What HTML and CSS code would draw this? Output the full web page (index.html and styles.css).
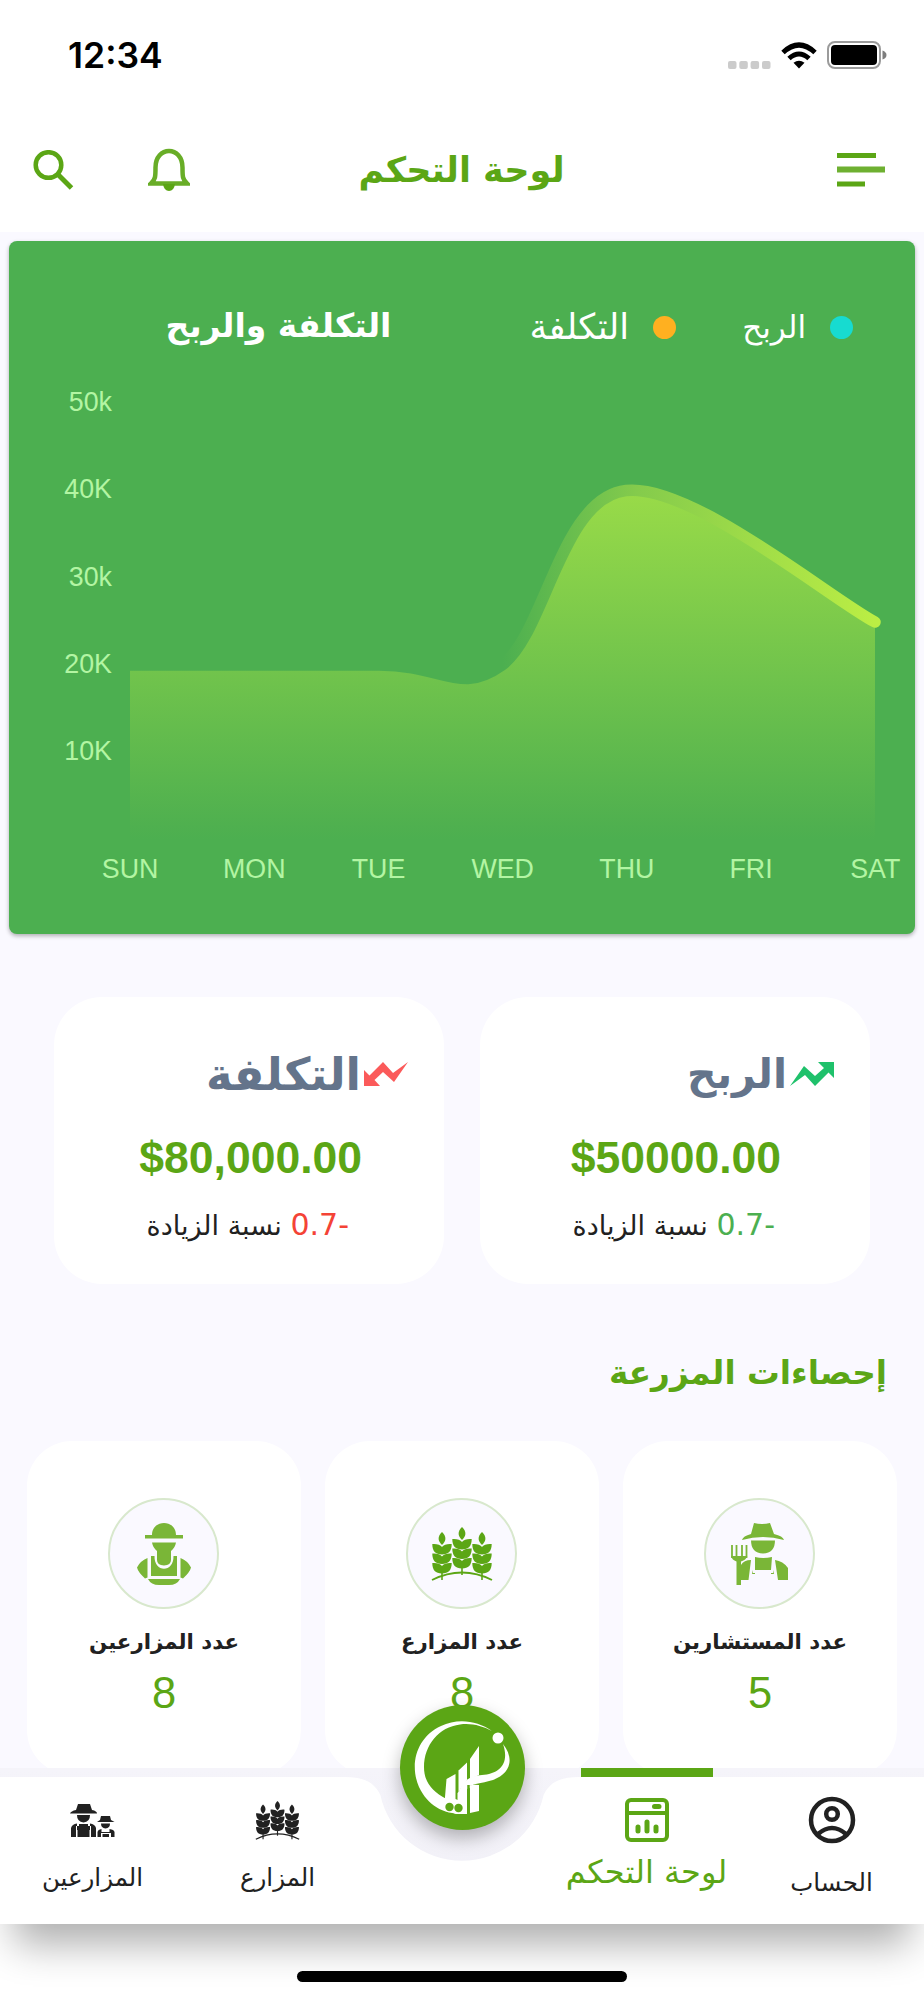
FILE: index.html
```html
<!DOCTYPE html>
<html lang="ar" dir="rtl">
<head>
    <meta charset="UTF-8">
    <meta name="viewport" content="width=device-width, initial-scale=1.0">
    <title>لوحة التحكم</title>
    <link rel="stylesheet" href="styles.css">
</head>
<body>
    <svg class="sprite" width="0" height="0">
        <defs>
            <path id="leafPair" d="M0 8.500C-6.500 8.500-9.700 5-9.700-2C-6-2.500-1.500-1.500 0 1C1.500-1.500 6-2.500 9.700-2C9.700 5 6.500 8.500 0 8.500Z"/>
            <g id="ear">
                <path d="M0-17C5-12 4-8 0-4C-4-8-5-12 0-17Z"/>
                <use href="#leafPair" y="-3"/>
                <use href="#leafPair" y="6.500"/>
                <use href="#leafPair" y="16"/>
                <path d="M-.8 22h1.600v9h-1.600z"/>
            </g>
            <g id="wheat">
                <use href="#ear" x="10" y="22"/>
                <use href="#ear" x="30" y="17"/>
                <use href="#ear" x="50" y="22"/>
                <path d="M0 53Q30 38 60 53" fill="none" stroke="currentColor" stroke-width="1.800"/>
            </g>
        </defs>
    </svg>

    <div class="screen">
        <div class="status-bar">
            <span class="time">12:34</span>
            <div class="status-icons">
                <svg width="43" height="8" viewBox="0 0 43 8" fill="#cbcbcb">
                    <rect width="8.500" height="8" rx="2"/><rect x="11.300" width="8.500" height="8" rx="2"/>
                    <rect x="22.600" width="8.500" height="8" rx="2"/><rect x="34" width="8.500" height="8" rx="2"/>
                </svg>
                <svg class="wifi" width="36" height="27" viewBox="0 0 36 27" fill="none" stroke="#000" stroke-width="5">
                    <path d="M2 10.500Q18-4.500 34 10.500"/>
                    <path d="M8 16.500Q18 7.500 28 16.500"/>
                    <path d="M18 26.500L12.500 20.800Q18 16.500 23.500 20.800Z" fill="#000" stroke="none"/>
                </svg>
                <svg width="60" height="28" viewBox="0 0 60 28">
                    <rect x="1" y="1" width="52" height="26" rx="7" fill="none" stroke="#9b9b9b" stroke-width="2"/>
                    <rect x="4" y="4" width="46" height="20" rx="4"/>
                    <path d="M55.500 9.500q4 1.500 4 4.500t-4 4.500z" fill="#7d7d7d"/>
                </svg>
            </div>
        </div>

        <header class="app-bar">
            <svg class="menu-icon" width="48" height="36" viewBox="0 0 48 36" stroke-width="5">
                <path d="M0 3.500h39M0 32h28"/>
                <path d="M0 17.500h48" stroke-width="6" opacity=".88"/>
            </svg>
            <h1>لوحة التحكم</h1>
            <div class="actions">
                <svg width="42" height="44" viewBox="0 0 42 44">
                    <path d="M3 35.500h36c-4.500-4-4.500-7-4.500-16C34.500 9 28 3 21 3S7.500 9 7.500 19.500c0 9 0 12-4.500 16z" fill="none" stroke="#5ba615" stroke-width="4.500" opacity=".92"/>
                    <path d="M15 36h12q-1 7-6 7t-6-7z" fill="#5ba615"/>
                </svg>
                <svg width="41" height="41" viewBox="0 0 41 41" fill="none" stroke="#5ba615">
                    <circle cx="15.500" cy="15" r="12.800" stroke-width="4.500"/>
                    <path d="M25 24.500L38.500 38" stroke-width="5"/>
                </svg>
            </div>
        </header>

        <main>
            <section class="chart-card">
                <div class="chart-head">
                    <span class="legend profit"><i></i>الربح</span>
                    <span class="legend cost"><i></i>التكلفة</span>
                    <h2>التكلفة والربح</h2>
                </div>
                <div class="chart">
                    <div class="y-axis">
                        <span>50k</span><span>40K</span><span>30k</span><span>20K</span><span>10K</span>
                    </div>
                    <svg width="757" height="450" viewBox="130 390 757 450">
                        <defs>
                            <linearGradient id="area" gradientUnits="userSpaceOnUse" x1="0" y1="482" x2="0" y2="840">
                                <stop offset="0" stop-color="#9bdc48"/>
                                <stop offset=".96" stop-color="#4fb04f"/>
                                <stop offset="1" stop-color="#4caf50"/>
                            </linearGradient>
                            <linearGradient id="line" gradientUnits="userSpaceOnUse" x1="130" y1="0" x2="875" y2="0">
                                <stop offset=".5" stop-color="#4caf50"/>
                                <stop offset=".68" stop-color="#84cb4c"/>
                                <stop offset="1" stop-color="#bbee44"/>
                            </linearGradient>
                        </defs>
                        <path fill="url(#area)" d="M130 665H379C444 665 459 695.600 502 665C545 634.400 561 497.500 626 490C691 482.500 831 599 875 622V840H130Z"/>
                        <path fill="none" stroke="url(#line)" stroke-width="11.500" stroke-linecap="round" d="M130 665H379C444 665 459 695.600 502 665C545 634.400 561 497.500 626 490.500C691 483 831 599 875 622"/>
                    </svg>
                </div>
                <div class="x-axis">
                    <span>SUN</span><span>MON</span><span>TUE</span><span>WED</span><span>THU</span><span>FRI</span><span>SAT</span>
                </div>
            </section>

            <section class="totals">
                <div class="total-card up">
                    <h3>
                        <svg width="44" height="26" viewBox="0 0 44 26"><path d="M0 25L14 5L25 15L34 7L28 1H44V17L38.500 11.500L25 25L15 14Z" fill="#1fc16b"/></svg>
                        <span>الربح</span>
                    </h3>
                    <strong dir="ltr">$50000.00</strong>
                    <p><b>-0.7</b> نسبة الزيادة</p>
                </div>
                <div class="total-card down">
                    <h3>
                        <svg width="44" height="26" viewBox="0 0 44 26"><path d="M44 1L30 21L19 11L10.500 19L16 25H0V9L5.500 14.500L19 1L29 12Z" fill="#fb5a5a"/></svg>
                        <span>التكلفة</span>
                    </h3>
                    <strong dir="ltr">$80,000.00</strong>
                    <p><b>-0.7</b> نسبة الزيادة</p>
                </div>
            </section>

            <h2 class="section-title">إحصاءات المزرعة</h2>

            <section class="stats">
                <div class="stat-card">
                    <div class="stat-icon">
                        <svg width="58" height="64" viewBox="0 0 58 64" fill="#7ab637">
                            <path d="M23 1Q31 3 39 1L43 12Q52 14 53 18Q32 12 11 18Q12 14 20 12Z"/>
                            <path d="M20 18.500H44Q44 31 32 31.500Q20 31 20 18.500Z"/>
                            <path d="M24 35Q32 37 41 35L40 48H24Z"/>
                            <path d="M20 38L17.500 58H10V43Q13 38 20 38ZM44 38Q52 39 57 46V58H47Z"/>
                            <path d="M22 48v3h2v1h-3zM42 48v3h-2v1h3z"/>
                            <path d="M1 23V36M5.500 23V36M11 23V36M15.500 23V36" fill="none" stroke="#7ab637" stroke-width="1.800"/>
                            <path d="M.1 34H16.400Q15 38 10 39.500V63H5.500V39.500Q1 38 .1 34Z"/>
                        </svg>
                    </div>
                    <h4>عدد المستشارين</h4>
                    <span>5</span>
                </div>
                <div class="stat-card">
                    <div class="stat-icon wheat">
                        <svg width="62" height="54" viewBox="-1 0 62 54" fill="currentColor"><use href="#wheat"/></svg>
                    </div>
                    <h4>عدد المزارع</h4>
                    <span>8</span>
                </div>
                <div class="stat-card">
                    <div class="stat-icon">
                        <svg width="54" height="64" viewBox="0 0 54 64" fill="#7ab637">
                            <path d="M15 13C15-3 39-3 39 13H46V16.500H8V13Z"/>
                            <path d="M15 20.500H39Q38 26 34 29V38Q34 43 27 43.500Q20 43 20 38V29Q16 26 15 20.500Z"/>
                            <path d="M14 34H17.500C17 51 37 51 36.500 34H40V54H14Z"/>
                            <path d="M10.500 36V55.500L8 56.500Q1 50 0 45.500Q3 39 10.500 36ZM43.500 36V55.500L46 56.500Q53 50 54 45.500Q51 39 43.500 36Z"/>
                            <path d="M11 57H43Q40 63 32 63H22Q14 63 11 57Z"/>
                        </svg>
                    </div>
                    <h4>عدد المزارعين</h4>
                    <span>8</span>
                </div>
            </section>
        </main>

        <nav class="bottom-nav">
            <svg class="nav-bg" width="924" height="156" viewBox="0 0 924 156">
                <path d="M0 9H345C364 9 374 14 380.400 27A83.500 83.500 0 0 0 543.600 27C550 14 560 9 579 9H924V156H0Z" fill="#fff"/>
            </svg>
            <div class="nav-item account">
                <svg width="48" height="48" viewBox="0 0 48 48" fill="none" stroke="#212121" stroke-width="4.500">
                    <circle cx="24" cy="24" r="21"/><circle cx="24" cy="18" r="5.800"/>
                    <path d="M10 38Q24 26 38 38"/>
                </svg>
                <span>الحساب</span>
            </div>
            <div class="nav-item active">
                <svg width="46" height="46" viewBox="0 0 46 46" fill="none" stroke="#5ba615" stroke-width="4">
                    <rect x="3" y="3" width="40" height="40" rx="4"/>
                    <path d="M3 16H43"/>
                    <path d="M30.500 9.500H35M14 30V34M23 25V34M32 30V34" stroke-width="5" stroke-linecap="round"/>
                </svg>
                <span>لوحة التحكم</span>
            </div>
            <div class="nav-gap"></div>
            <div class="nav-item farms">
                <svg width="45" height="39" viewBox="-1 0 62 54" fill="currentColor"><use href="#wheat"/></svg>
                <span>المزارع</span>
            </div>
            <div class="nav-item farmers">
                <svg width="45" height="34" viewBox="0 0 45 34" fill="#212121">
                    <path d="M8 0H20L22 6Q27 7 27 9.500H0Q1 7 6 6Z"/>
                    <path d="M7 11H20Q20 18 13.500 18.500Q7 18 7 11Z"/>
                    <path d="M1 33V24Q2 20 7 19.500V26H20V19.500Q25 20 26 24V33H21V22H6V33Z"/>
                    <path d="M9 20H18V24H9ZM7.500 26H19.500V33H7.500Z"/>
                    <path d="M31 12H40L41 16L44.500 18H27L30 16Z"/>
                    <path d="M31 19.500H40Q40 24 35.500 24.500Q31 24 31 19.500Z"/>
                    <path d="M27.500 33V28Q28 25.500 31.500 25V28H39.500V25Q44 25.500 44.500 28V33H41V29H31V33ZM32.500 30H39V33H32.500Z"/>
                </svg>
                <span>المزارعين</span>
            </div>
            <div class="fab">
                <svg width="125" height="125" viewBox="0 0 125 125" fill="#fff">
                    <path d="M92 26C77 15 57 13 41 21C17 32 9 59 19 82C28 101 44 110 67 109V106H48L46.500 94C31 86 24 76 24 62C24 40 39 22 60 19.500C72 18 82 21 92 26Z"/>
                    <path d="M46.500 74L55.500 69V94L60 96H67V109H56L44 104Z"/>
                    <path d="M58 66L67 57.500V75Q61 81 58.500 89V66ZM70 54L79 41V70L70 74Z"/>
                    <path d="M57.500 105V88Q66 78 79 80V106L70 108V83L67 84V108Z"/>
                    <path d="M103 39C115 54 110 69 93 75C77 80 66 78 59 90C60 76 70 71 82 70C99 69 110 59 103 39Z"/>
                    <circle cx="98" cy="33" r="5.500"/>
                    <path d="M68.500 80V109" stroke="#5ba615" stroke-width="2.500"/>
                    <circle cx="49.500" cy="102" r="4.200" fill="#5ba615"/><circle cx="58.500" cy="103" r="4.200" fill="#5ba615"/>
                </svg>
            </div>
        </nav>

        <footer class="home-area"><div class="home-bar"></div></footer>
    </div>
</body>
</html>
```

FILE: styles.css
```css
* {
    box-sizing: border-box;
}
body {
    margin: 0;
    background: #fff;
    color: #212121;
    font-family: "DejaVu Sans", sans-serif;
}
h1, h2, h3, h4, p {
    margin: 0;
}
svg {
    display: block;
    flex: none;
}
.sprite {
    position: absolute;
}
.screen {
    width: 924px;
    height: 2000px;
    overflow: hidden;
    display: flex;
    flex-direction: column;
}

/* status bar */
.status-bar {
    direction: ltr;
    height: 110px;
    padding: 0 37px 0 68px;
    display: flex;
    justify-content: space-between;
    color: #000;
}
.time {
    margin-top: 34px;
    font: 600 35.5px/44px Inter, sans-serif;
}
.status-icons {
    display: flex;
    align-items: flex-end;
    height: 69px;
    gap: 10px;
}

/* header */
.app-bar {
    height: 122px;
    padding: 0 39px 2px 33px;
    display: grid;
    grid-template-columns: 1fr auto 1fr;
    align-items: center;
}
.app-bar h1 {
    margin-left: 5px;
    font-size: 35px;
    color: #5ba615;
    line-height: 60px;
    white-space: nowrap;
}
.menu-icon {
    stroke: #5ba615;
}
.actions {
    display: flex;
    justify-content: flex-end;
    align-items: center;
    gap: 74px;
}

/* content */
main {
    height: 1536px;
    flex: none;
    background: #faf9ff;
    padding-top: 9px;
    overflow: hidden;
}
.chart-card {
    height: 693px;
    margin: 0 9px;
    border-radius: 8px;
    background: #4caf50;
    box-shadow: 0 2px 4px rgba(0, 0, 0, 0.3);
    color: #fff;
}
.chart-head {
    height: 148px;
    padding: 60px 62px 0 0;
    display: flex;
    align-items: flex-start;
}
.chart-head h2 {
    font-size: 33px;
    line-height: 50px;
    margin-right: 138px;
    white-space: nowrap;
}
.legend {
    display: flex;
    align-items: center;
    height: 52px;
    font-size: 31px;
    line-height: 48px;
    gap: 24px;
}
.legend i {
    width: 23px;
    height: 23px;
    border-radius: 50%;
}
.profit i {
    background: #17dbd0;
}
.cost i {
    background: #ffb020;
}
.cost {
    margin-right: 66px;
    font-size: 35.5px;
}
.chart {
    direction: ltr;
    display: flex;
}
.chart svg {
    margin-top: 1px;
}
.y-axis, .x-axis {
    font-family: "Liberation Sans", sans-serif;
    font-size: 26.8px;
    color: #b3f5a3;
}
.y-axis {
    width: 121px;
    padding-right: 18px;
    text-align: right;
}
.y-axis span {
    display: block;
    height: 87.300px;
    line-height: 27px;
}
.x-axis {
    direction: ltr;
    display: grid;
    grid-template-columns: repeat(7, 124.200px);
    margin: 13px 0 0 59px;
    line-height: 32px;
    text-align: center;
}

/* profit / cost */
.totals {
    display: grid;
    grid-template-columns: 390px 390px;
    gap: 36px;
    justify-content: center;
    margin-top: 63px;
}
.total-card {
    height: 287px;
    border-radius: 48px;
    background: #fff;
    padding: 43px 36px 0;
}
.total-card h3 {
    display: flex;
    align-items: center;
    gap: 3px;
    height: 68px;
    font-size: 45px;
    color: #64748b;
}
.up h3 {
    font-size: 41px;
}
.total-card strong {
    display: block;
    height: 73px;
    margin-right: 46px;
    text-align: right;
    font: bold 44.500px/100px "Liberation Sans", sans-serif;
    color: #5ba615;
}
.up strong {
    margin-right: 53px;
}
.total-card p {
    margin-right: 59px;
    font-size: 27px;
    line-height: 88px;
    color: #212121;
    white-space: nowrap;
}
.total-card b {
    font-size: 30px;
    font-weight: normal;
    color: #4caf50;
}
.down b {
    color: #f44336;
}
.section-title {
    margin: 59px 37px 0;
    font-size: 32.7px;
    line-height: 60px;
    color: #5ba615;
}

/* farm statistics */
.stats {
    display: grid;
    grid-template-columns: repeat(3, 274px);
    gap: 24px;
    justify-content: center;
    margin-top: 38px;
}
.stat-card {
    height: 334px;
    border-radius: 45px;
    background: #fff;
    padding-top: 57px;
    text-align: center;
}
.stat-icon {
    width: 111px;
    height: 111px;
    margin: 0 82px 0 0;
    border: 2px solid #d8e8cd;
    border-radius: 50%;
    background: #faf9ff;
    display: flex;
    align-items: center;
    justify-content: center;
}
.wheat {
    color: #5ba615;
}
.stat-card h4 {
    margin-top: 16px;
    font-size: 21.3px;
    line-height: 34px;
}
.stat-card > span {
    display: block;
    font: 43.5px/56px "Liberation Sans", sans-serif;
    margin-top: 6px;
    color: #5ba615;
}

/* bottom navigation */
.bottom-nav {
    position: relative;
    height: 156px;
    flex: none;
    display: flex;
    background: linear-gradient(#f5f4fa, #f0eff6);
    box-shadow: 0 34px 38px -14px rgba(0, 0, 0, 0.32);
    clip-path: inset(-70px 0 -80px 0);
}
.nav-bg {
    position: absolute;
    top: 0;
    left: 0;
}
.nav-item {
    position: relative;
    width: 185px;
    display: flex;
    flex-direction: column;
    align-items: center;
    font-size: 24.5px;
    white-space: nowrap;
}
.nav-item span {
    line-height: 40px;
}
.nav-gap {
    width: 184px;
}
.account {
    padding-top: 28px;
}
.account span {
    margin-top: 19px;
}
.active {
    padding-top: 20px;
    color: #5ba615;
    font-size: 32px;
}
.active span {
    margin-top: 5px;
    line-height: 48px;
}
.active::before {
    content: "";
    position: absolute;
    top: 0;
    width: 132px;
    height: 9px;
    background: #5ba615;
}
.active svg {
    margin-top: 9px;
}
.farms {
    padding-top: 33px;
}
.farms span {
    margin-top: 18px;
}
.farmers {
    padding-top: 36px;
}
.farmers span {
    margin-top: 20px;
}
.fab {
    position: absolute;
    top: -63px;
    left: 400px;
    width: 125px;
    height: 125px;
    border-radius: 50%;
    background: #5ba615;
    box-shadow: 0 8px 18px rgba(0, 0, 0, 0.28);
}
.home-area {
    display: flex;
    flex: 1;
    justify-content: center;
    padding-top: 47px;
}
.home-bar {
    position: relative;
    width: 330px;
    height: 11px;
    border-radius: 6px;
    background: #000;
}
```
